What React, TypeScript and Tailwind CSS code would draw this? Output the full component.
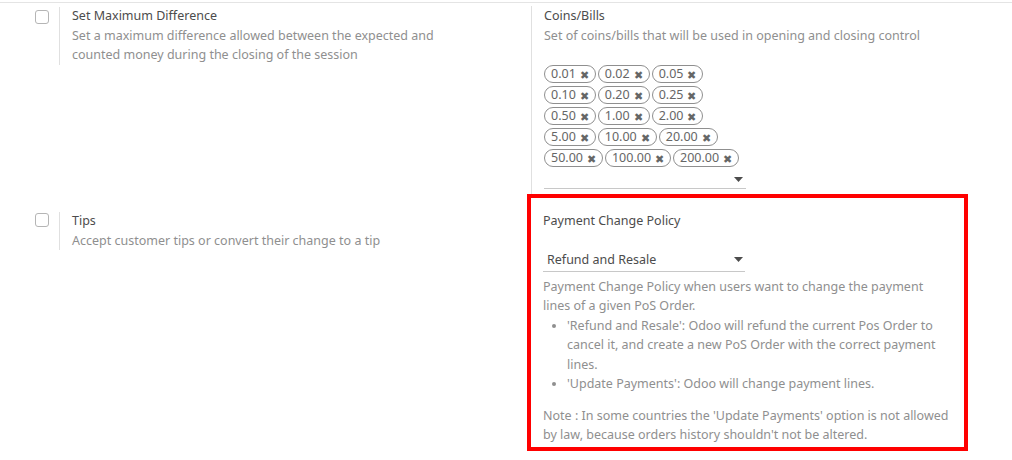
import React from "react";

const coins = [
  ["0.01", "0.02", "0.05"],
  ["0.10", "0.20", "0.25"],
  ["0.50", "1.00", "2.00"],
  ["5.00", "10.00", "20.00"],
  ["50.00", "100.00", "200.00"],
];

function Check() {
  return <div className="w-[14px] h-[14px] rounded-[3px] border border-[#b5b5b5] bg-white" />;
}

function Caret() {
  return (
    <svg width="9" height="5" viewBox="0 0 9 5" className="shrink-0">
      <path d="M0 0h9L4.5 5z" fill="#4c4c4c" />
    </svg>
  );
}

export default function App() {
  return (
    <div
      className="w-[1012px] h-[460px] bg-white text-[12.5px] leading-[19.5px] overflow-hidden"
      style={{ fontFamily: '"Noto Sans", sans-serif' }}
    >
      <div className="border-t border-[#e4e4e4] mt-[2px]" />

      {/* row 1 */}
      <div className="grid grid-cols-2">
        <div className="flex pl-[35px] pt-[4px]">
          <div className="w-[24px] pt-[3px] shrink-0">
            <Check />
          </div>
          <div className="border-l border-[#e0e0e0] pl-[12px] pb-[2px] h-[58px]">
            <div className="text-[#4c4c4c] -mt-[1px]">Set Maximum Difference</div>
            <div className="text-[#8f8f8f] w-[375px]">
              Set a maximum difference allowed between the expected and counted money during the closing of the session
            </div>
          </div>
        </div>
        <div className="pt-[4px] pl-[25px]">
          <div className="border-l border-[#e0e0e0] pl-[12px] h-[188px]">
            <div className="text-[#4c4c4c] -mt-[1px]">Coins/Bills</div>
            <div className="text-[#8f8f8f]">Set of coins/bills that will be used in opening and closing control</div>
            <div className="mt-[20px] w-[202px] flex flex-col gap-[3px]">
              {coins.map((row, i) => (
                <div key={i} className="flex gap-[2px]">
                  {row.map((c) => (
                    <span
                      key={c}
                      className="flex items-center gap-[4px] h-[18px] px-[6px] rounded-full border border-[#8f8f8f] text-[#666] text-[12.5px] leading-none"
                    >
                      {c}
                      <span className="text-[11px] text-[#666]">✖</span>
                    </span>
                  ))}
                </div>
              ))}
            </div>
            <div className="w-[202px] mt-[3px] border-b border-[#c8c8c8] h-[19px] flex justify-end items-center pr-[3px]">
              <Caret />
            </div>
          </div>
        </div>
      </div>

      {/* row 2 */}
      <div className="grid grid-cols-2">
        <div className="flex pl-[35px] pt-[18px]">
          <div className="w-[24px] pt-[1px] shrink-0">
            <Check />
          </div>
          <div className="border-l border-[#e0e0e0] pl-[12px] h-[38px]">
            <div className="text-[#4c4c4c] -mt-[1px]">Tips</div>
            <div className="text-[#8f8f8f]">Accept customer tips or convert their change to a tip</div>
          </div>
        </div>
        <div className="pl-[21px]">
          <div className="w-[441px] h-[257px] border-4 border-[#ff0000] pl-[12px] pr-[6px] pt-[13px]">
            <div className="text-[#4c4c4c]">Payment Change Policy</div>
            <div className="mt-[18px] w-[202px] border-b border-[#c8c8c8] h-[23px] flex items-center justify-between pl-[4px] pr-[2px] text-[#4c4c4c] text-[12.5px]">
              <span>Refund and Resale</span>
              <Caret />
            </div>
            <div className="text-[#8f8f8f] mt-[5px]">
              <div className="pr-[10px]">Payment Change Policy when users want to change the payment lines of a given PoS Order.</div>
              <ul className="list-disc pl-[24px] pr-[10px]">
                <li>
                  'Refund and Resale': Odoo will refund the current Pos Order to cancel it, and create a new PoS Order
                  with the correct payment lines.
                </li>
                <li>'Update Payments': Odoo will change payment lines.</li>
              </ul>
              <div className="mt-[12px]">
                Note : In some countries the 'Update Payments' option is not allowed by law, because orders history
                shouldn't not be altered.
              </div>
            </div>
          </div>
        </div>
      </div>
    </div>
  );
}
